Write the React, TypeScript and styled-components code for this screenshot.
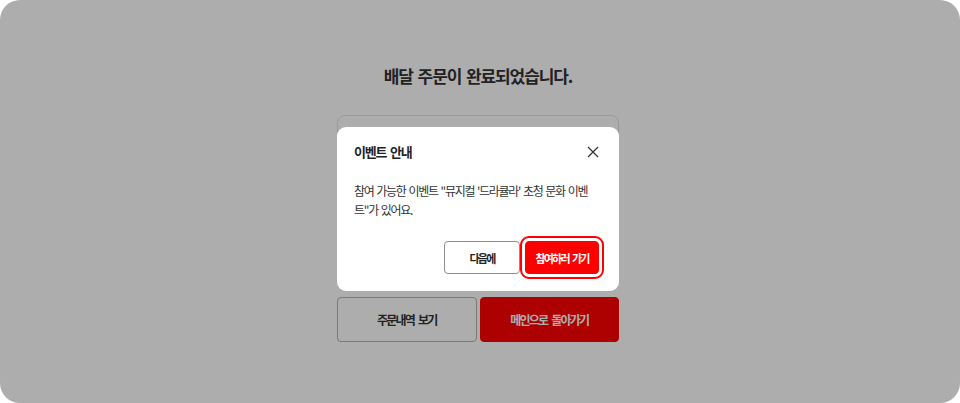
import styled, { createGlobalStyle } from "styled-components";

const GlobalStyle = createGlobalStyle`
  html, body {
    margin: 0;
    padding: 0;
    background: #ffffff;
  }
  * {
    box-sizing: border-box;
  }
  body {
    font-family: "Noto Sans CJK KR", "Noto Sans", sans-serif;
  }
`;

const Screen = styled.div`
  position: relative;
  width: 960px;
  height: 403px;
  border-radius: 20px;
  overflow: hidden;
  background: #ffffff;
`;

const Page = styled.main`
  display: flex;
  flex-direction: column;
  align-items: center;
  padding: 64px 4px 0 0;
`;

const Title = styled.h1`
  margin: 0;
  font-size: 17px;
  line-height: 24px;
  font-weight: 700;
  letter-spacing: -1.1px;
  word-spacing: 2px;
  color: #333333;
`;

const Column = styled.div`
  width: 282px;
  display: flex;
  flex-direction: column;
`;

const InfoCard = styled.section`
  margin-top: 27px;
  height: 170px;
  border: 1px solid #e2e2e2;
  border-radius: 8px;
`;

const ActionRow = styled.div`
  margin-top: 12px;
  display: grid;
  grid-template-columns: 1fr 1fr;
  gap: 3px;
`;

const PageButton = styled.button<{ $primary?: boolean }>`
  height: 45px;
  border-radius: 4px;
  font-family: inherit;
  font-size: 12px;
  font-weight: 700;
  letter-spacing: -1.8px;
  word-spacing: 3px;
  border: 1px solid ${(p) => (p.$primary ? "#ff0000" : "#b4b4b4")};
  background: ${(p) => (p.$primary ? "#ff0000" : "#ffffff")};
  color: ${(p) => (p.$primary ? "#ffffff" : "#333333")};
`;

const Overlay = styled.div`
  position: absolute;
  inset: 0;
  background: rgba(0, 0, 0, 0.32);
  display: flex;
  justify-content: center;
  align-items: flex-start;
  padding: 127px 4px 0 0;
`;

const Modal = styled.div`
  width: 282px;
  background: #ffffff;
  border-radius: 9px;
  padding: 15px 20px 17px 17px;
  display: flex;
  flex-direction: column;
`;

const ModalHeader = styled.div`
  display: flex;
  align-items: center;
  justify-content: space-between;
  height: 20px;
`;

const ModalTitle = styled.h2`
  margin: 0;
  font-size: 13px;
  line-height: 20px;
  font-weight: 700;
  letter-spacing: -1.2px;
  word-spacing: 2px;
  color: #222222;
`;

const CloseButton = styled.button`
  width: 14px;
  height: 14px;
  padding: 0;
  margin-right: -1px;
  border: none;
  background: transparent;
  display: flex;
  align-items: center;
  justify-content: center;
  color: #333333;
`;

const ModalBody = styled.p`
  margin: 19px 0 0;
  font-size: 12px;
  line-height: 19px;
  letter-spacing: -1.3px;
  word-spacing: 1.5px;
  color: #333333;
  padding-right: 6px;
`;

const ModalFooter = styled.div`
  margin-top: 22px;
  display: flex;
  justify-content: flex-end;
  gap: 5px;
`;

const ModalButton = styled.button<{ $primary?: boolean }>`
  height: 33px;
  width: ${(p) => (p.$primary ? "74px" : "76px")};
  border-radius: 4px;
  font-family: inherit;
  font-size: 11px;
  font-weight: 700;
  letter-spacing: -1.8px;
  word-spacing: 2.5px;
  border: 1px solid ${(p) => (p.$primary ? "#ff0000" : "#8e8e8e")};
  background: ${(p) => (p.$primary ? "#ff0000" : "#ffffff")};
  color: ${(p) => (p.$primary ? "#ffffff" : "#222222")};
  outline: ${(p) => (p.$primary ? "2px solid #ff0000" : "none")};
  outline-offset: 3px;
`;

export default function App() {
  return (
    <>
      <GlobalStyle />
      <Screen>
        <Page>
          <Title>배달 주문이 완료되었습니다.</Title>
          <Column>
            <InfoCard />
            <ActionRow>
              <PageButton>주문내역 보기</PageButton>
              <PageButton $primary>메인으로 돌아가기</PageButton>
            </ActionRow>
          </Column>
        </Page>
        <Overlay>
          <Modal>
            <ModalHeader>
              <ModalTitle>이벤트 안내</ModalTitle>
              <CloseButton aria-label="닫기">
                <svg width="12" height="12" viewBox="0 0 12 12">
                  <path
                    d="M1 1L11 11M11 1L1 11"
                    stroke="currentColor"
                    strokeWidth="1.3"
                    fill="none"
                  />
                </svg>
              </CloseButton>
            </ModalHeader>
            <ModalBody>
              참여 가능한 이벤트 "뮤지컬 '드라큘라' 초청 문화 이벤트"가 있어요.
            </ModalBody>
            <ModalFooter>
              <ModalButton>다음에</ModalButton>
              <ModalButton $primary>참여하러 가기</ModalButton>
            </ModalFooter>
          </Modal>
        </Overlay>
      </Screen>
    </>
  );
}
